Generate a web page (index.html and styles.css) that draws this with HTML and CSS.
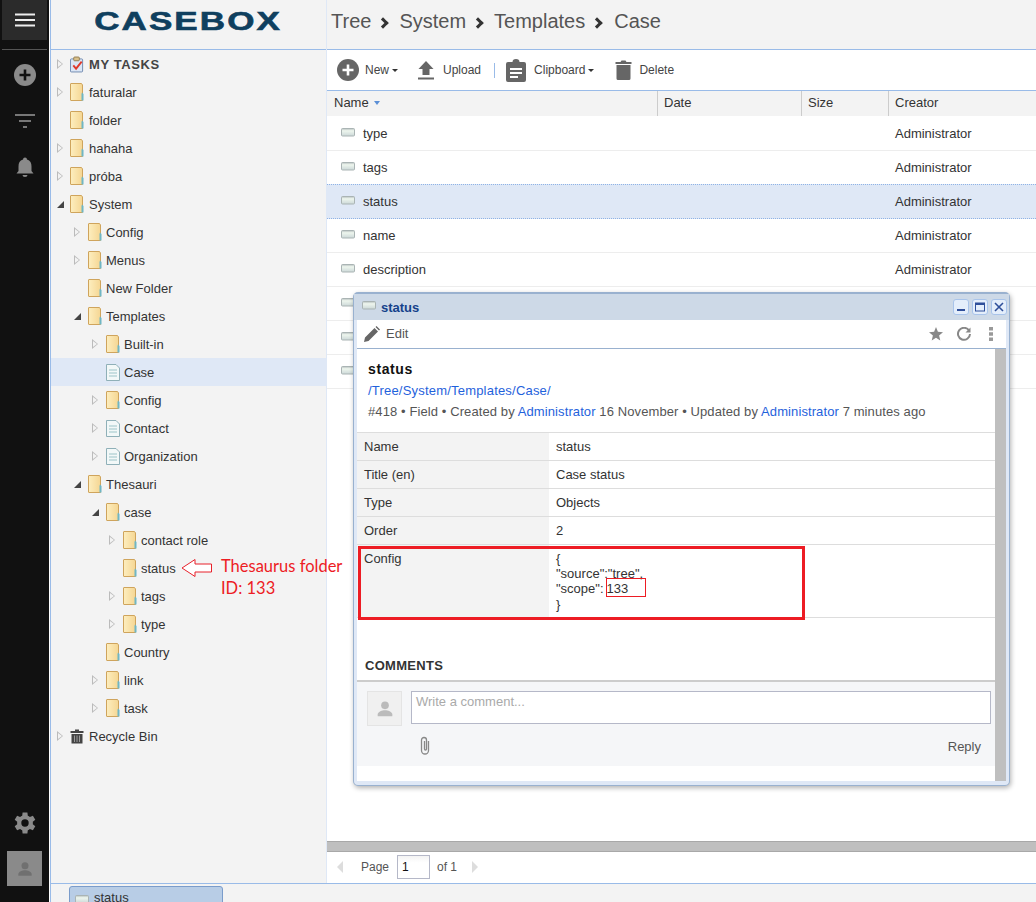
FILE: index.html
```html
<!DOCTYPE html>
<html lang="en">
<head>
    <meta charset="UTF-8">
    <title>CaseBox</title>
    <link rel="stylesheet" href="styles.css">
</head>
<body>
<svg class="defs" width="0" height="0">
    <defs>
        <linearGradient id="folder-fill" x1="0" y1="0" x2="1" y2="0">
            <stop offset="0" stop-color="#fdeebf"/>
            <stop offset="1" stop-color="#f5d693"/>
        </linearGradient>
        <linearGradient id="field-fill" x1="0" y1="0" x2="0" y2="1">
            <stop offset="0" stop-color="#b4bdbd"/>
            <stop offset="0.3" stop-color="#eef6ee"/>
            <stop offset="1" stop-color="#ccd8d8"/>
        </linearGradient>
        <symbol id="i-folder" viewBox="0 0 14 18">
            <path d="M1 .5H11.500L12.500 2V17.500H1Q.5 17.500 .5 17V1Q.5 .5 1 .5Z" fill="url(#folder-fill)" stroke="#cfa45c"/>
            <path d="M12 9.500L13.500 11V17.500H11.500V11Z" fill="#6fb6c4"/>
        </symbol>
        <symbol id="i-field" viewBox="0 0 14 9">
            <rect x=".5" y=".5" width="13" height="7.500" rx="1" fill="url(#field-fill)" stroke="#aab4b4"/>
        </symbol>
        <symbol id="i-person" viewBox="0 0 24 24">
            <circle cx="12" cy="8" r="4.200" fill="currentColor"/>
            <path d="M4 20v-2c0-3 5-4.600 8-4.600s8 1.600 8 4.600v2Z" fill="currentColor"/>
        </symbol>
    </defs>
</svg>

<div class="app">
    <!-- Left rail -->
    <nav class="rail">
        <div class="rail-menu">
            <svg width="20" height="14" viewBox="0 0 20 14"><path d="M0 1.500H20M0 7H20M0 12.500H20" stroke="#eee" stroke-width="2"/></svg>
        </div>
        <div class="rail-sep"></div>
        <svg class="rail-icon" width="22" height="22" viewBox="0 0 22 22"><circle cx="11" cy="11" r="11" fill="#8a8a8a"/><path d="M11 5.500V16.500M5.500 11H16.500" stroke="#111" stroke-width="2.600"/></svg>
        <svg class="rail-icon" width="22" height="22" viewBox="0 0 22 22"><path d="M1 5H21M5 11H17M9 17H13" stroke="#777" stroke-width="2"/></svg>
        <svg class="rail-icon" width="22" height="22" viewBox="0 0 22 22"><path d="M11 1.500a2 2 0 0 1 2 2c3.300 1 4.500 3.500 4.500 7V15l2 2.500H2.500l2-2.500v-4.500c0-3.500 1.200-6 4.500-7a2 2 0 0 1 2-2ZM8.500 19h5a2.500 2 0 0 1-5 0Z" fill="#8a8a8a"/></svg>
        <svg class="rail-gear" width="24" height="24" viewBox="0 0 24 24"><path fill="#8a8a8a" fill-rule="evenodd" d="M19.800 13.200a8 8 0 0 0 0-2.400l2.500-2-2.400-4.100-3 1.200a8 8 0 0 0-2.100-1.200L14.400 1.500H9.600l-.4 3.200a8 8 0 0 0-2.100 1.200l-3-1.200-2.400 4.100 2.500 2a8 8 0 0 0 0 2.400l-2.500 2 2.400 4.100 3-1.200a8 8 0 0 0 2.100 1.200l.4 3.200h4.800l.4-3.200a8 8 0 0 0 2.100-1.200l3 1.200 2.400-4.100ZM12 15.700a3.700 3.700 0 1 1 0-7.400 3.700 3.700 0 0 1 0 7.400Z"/></svg>
        <div class="rail-user"><svg width="20" height="20"><use href="#i-person"/></svg></div>
    </nav>

    <div class="workspace">
        <div class="panels">
            <!-- Tree -->
            <aside class="side">
                <div class="logo-bar"><span class="logo">CASEBOX</span></div>
                <ul class="tree">
                    <li class="node lv0"><i class="arrow"></i>
                        <svg class="node-icon" width="14" height="17" viewBox="0 0 15 17"><rect x=".5" y="2.500" width="13" height="14" rx="1" fill="#dbe6f5" stroke="#6d87ad"/><rect x="4" y=".5" width="6" height="4" rx="1" fill="#d9c08a" stroke="#8f7a4d"/><path d="M3.500 9.500L6.500 13 12.500 5.500" fill="none" stroke="#e0392b" stroke-width="2"/></svg>
                        <b class="tasks">MY TASKS</b></li>
                    <li class="node lv0"><i class="arrow"></i><svg class="node-icon folder"><use href="#i-folder"/></svg>faturalar</li>
                    <li class="node lv0"><i class="arrow none"></i><svg class="node-icon folder"><use href="#i-folder"/></svg>folder</li>
                    <li class="node lv0"><i class="arrow"></i><svg class="node-icon folder"><use href="#i-folder"/></svg>hahaha</li>
                    <li class="node lv0"><i class="arrow"></i><svg class="node-icon folder"><use href="#i-folder"/></svg>próba</li>
                    <li class="node lv0"><i class="arrow open"></i><svg class="node-icon folder"><use href="#i-folder"/></svg>System</li>
                    <li class="node lv1"><i class="arrow"></i><svg class="node-icon folder"><use href="#i-folder"/></svg>Config</li>
                    <li class="node lv1"><i class="arrow"></i><svg class="node-icon folder"><use href="#i-folder"/></svg>Menus</li>
                    <li class="node lv1"><i class="arrow none"></i><svg class="node-icon folder"><use href="#i-folder"/></svg>New Folder</li>
                    <li class="node lv1"><i class="arrow open"></i><svg class="node-icon folder"><use href="#i-folder"/></svg>Templates</li>
                    <li class="node lv2"><i class="arrow"></i><svg class="node-icon folder"><use href="#i-folder"/></svg>Built-in</li>
                    <li class="node lv2 selected"><i class="arrow none"></i><svg class="node-icon" width="14" height="17" viewBox="0 0 14 17"><path d="M.5.5H10L13.500 4V16.500H.5Z" fill="#f2f8f8" stroke="#8fb0b8"/><path d="M3 6H11M3 9H11M3 12H11" stroke="#9cc4c8"/></svg>Case</li>
                    <li class="node lv2"><i class="arrow"></i><svg class="node-icon folder"><use href="#i-folder"/></svg>Config</li>
                    <li class="node lv2"><i class="arrow"></i><svg class="node-icon" width="14" height="17" viewBox="0 0 14 17"><path d="M.5.5H10L13.500 4V16.500H.5Z" fill="#f2f8f8" stroke="#8fb0b8"/><path d="M3 6H11M3 9H11M3 12H11" stroke="#9cc4c8"/></svg>Contact</li>
                    <li class="node lv2"><i class="arrow"></i><svg class="node-icon" width="14" height="17" viewBox="0 0 14 17"><path d="M.5.5H10L13.500 4V16.500H.5Z" fill="#f2f8f8" stroke="#8fb0b8"/><path d="M3 6H11M3 9H11M3 12H11" stroke="#9cc4c8"/></svg>Organization</li>
                    <li class="node lv1"><i class="arrow open"></i><svg class="node-icon folder"><use href="#i-folder"/></svg>Thesauri</li>
                    <li class="node lv2"><i class="arrow open"></i><svg class="node-icon folder"><use href="#i-folder"/></svg>case</li>
                    <li class="node lv3"><i class="arrow"></i><svg class="node-icon folder"><use href="#i-folder"/></svg>contact role</li>
                    <li class="node lv3"><i class="arrow none"></i><svg class="node-icon folder"><use href="#i-folder"/></svg>status
                        <svg class="note-arrow" width="32" height="20" viewBox="0 0 32 20"><path d="M1 10L14 1.500V6H30.500V14H14V18.500Z" fill="#fff" stroke="#e8212b"/></svg>
                    </li>
                    <li class="node lv3"><i class="arrow"></i><svg class="node-icon folder"><use href="#i-folder"/></svg>tags</li>
                    <li class="node lv3"><i class="arrow"></i><svg class="node-icon folder"><use href="#i-folder"/></svg>type</li>
                    <li class="node lv2"><i class="arrow none"></i><svg class="node-icon folder"><use href="#i-folder"/></svg>Country</li>
                    <li class="node lv2"><i class="arrow"></i><svg class="node-icon folder"><use href="#i-folder"/></svg>link</li>
                    <li class="node lv2"><i class="arrow"></i><svg class="node-icon folder"><use href="#i-folder"/></svg>task</li>
                    <li class="node lv0"><i class="arrow"></i>
                        <svg class="node-icon" width="14" height="15" viewBox="0 0 14 15"><path d="M5 .5H9V2H13.500V4H.5V2H5ZM1.500 5H12.500V14.500H1.500Z" fill="#444"/><path d="M4.500 6.500V13M7 6.500V13M9.500 6.500V13" stroke="#999"/></svg>
                        Recycle Bin</li>
                </ul>
                <div class="note">Thesaurus folder<br>ID: 133</div>
            </aside>

            <!-- Main -->
            <main class="main">
                <header class="crumbs">
                    <span>Tree</span><span class="chev"></span><span>System</span><span class="chev"></span><span>Templates</span><span class="chev"></span><span>Case</span>
                </header>
                <div class="toolbar">
                    <span class="tool">
                        <svg width="22" height="22" viewBox="0 0 22 22"><circle cx="11" cy="11" r="11" fill="#666"/><path d="M11 5.500V16.500M5.500 11H16.500" stroke="#fff" stroke-width="2.600"/></svg>
                        New<i class="caret"></i>
                    </span>
                    <span class="tool">
                        <svg width="18" height="20" viewBox="0 0 18 20"><path d="M9 1L16.500 9H12.500V15H5.500V9H1.500ZM1 17.500H17V19.500H1Z" fill="#666"/></svg>
                        Upload
                    </span>
                    <span class="tool-sep"></span>
                    <span class="tool">
                        <svg width="20" height="23" viewBox="0 0 20 23"><path fill="#666" fill-rule="evenodd" d="M2 3H6.500a3.500 3 0 0 1 7 0H18a2 2 0 0 1 2 2V21a2 2 0 0 1-2 2H2a2 2 0 0 1-2-2V5a2 2 0 0 1 2-2ZM4 9V11H16V9ZM4 13V15H16V13ZM4 17V19H12V17Z"/></svg>
                        Clipboard<i class="caret"></i>
                    </span>
                    <span class="tool">
                        <svg width="17" height="20" viewBox="0 0 17 20"><path d="M.5 2H5.500L6.500.5H10.500L11.500 2H16.500V4H.5ZM1.500 5H15.500V18.500Q15.500 20 14 20H3Q1.500 20 1.500 18.500Z" fill="#666"/></svg>
                        Delete
                    </span>
                </div>
                <div class="grid-head">
                    <div class="col col-name">Name<i class="sort"></i></div>
                    <div class="col col-date">Date</div>
                    <div class="col col-size">Size</div>
                    <div class="col col-creator">Creator</div>
                </div>
                <div class="grid-body">
                    <div class="grid-row"><svg class="field-icon"><use href="#i-field"/></svg><span class="row-name">type</span><span>Administrator</span></div>
                    <div class="grid-row"><svg class="field-icon"><use href="#i-field"/></svg><span class="row-name">tags</span><span>Administrator</span></div>
                    <div class="grid-row active"><svg class="field-icon"><use href="#i-field"/></svg><span class="row-name">status</span><span>Administrator</span></div>
                    <div class="grid-row"><svg class="field-icon"><use href="#i-field"/></svg><span class="row-name">name</span><span>Administrator</span></div>
                    <div class="grid-row"><svg class="field-icon"><use href="#i-field"/></svg><span class="row-name">description</span><span>Administrator</span></div>
                    <div class="grid-row"><svg class="field-icon"><use href="#i-field"/></svg></div>
                    <div class="grid-row"><svg class="field-icon"><use href="#i-field"/></svg></div>
                    <div class="grid-row"><svg class="field-icon"><use href="#i-field"/></svg></div>
                </div>
                <div class="hscroll"></div>
                <div class="pager">
                    <i class="page-prev"></i>
                    <span class="page-label">Page</span>
                    <span class="page-input">1</span>
                    <span class="page-of">of 1</span>
                    <i class="page-next"></i>
                </div>

                <!-- Preview window -->
                <section class="win">
                    <div class="win-title">
                        <svg class="field-icon"><use href="#i-field"/></svg>
                        <span class="win-name">status</span>
                        <span class="win-btns">
                            <span class="win-btn"><svg width="10" height="10" viewBox="0 0 10 10"><path d="M1 8H9" stroke="#2f4f9a" stroke-width="2"/></svg></span>
                            <span class="win-btn"><svg width="10" height="10" viewBox="0 0 10 10"><rect x=".5" y="1" width="9" height="8" fill="none" stroke="#2f4f9a"/><path d="M.5 2H9.500" stroke="#2f4f9a" stroke-width="2"/></svg></span>
                            <span class="win-btn"><svg width="10" height="10" viewBox="0 0 10 10"><path d="M1 1L9 9M9 1L1 9" stroke="#2f4f9a" stroke-width="1.600"/></svg></span>
                        </span>
                    </div>
                    <div class="win-tools">
                        <svg width="16" height="16" viewBox="0 0 16 16"><path d="M0 16L1 11.500 10.500 2 14 5.500 4.500 15ZM11.500 1L12.500 0 16 3.500 15 4.500Z" fill="#666"/></svg>
                        <span class="win-edit">Edit</span>
                        <span class="win-actions">
                            <svg width="14" height="14" viewBox="0 0 14 14"><path d="M7 0L8.900 4.800 14 5.200 10.100 8.500 11.300 13.500 7 10.800 2.700 13.500 3.900 8.500 0 5.200 5.100 4.800Z" fill="#888"/></svg>
                            <svg width="14" height="14" viewBox="0 0 14 14"><path d="M12 3.500A6 6 0 1 0 13 7" fill="none" stroke="#888" stroke-width="2"/><path d="M13.500 .5V5.500H8.500Z" fill="#888"/></svg>
                            <svg class="win-more" width="4" height="14" viewBox="0 0 4 14"><path d="M0 0H4V3.500H0ZM0 5.200H4V8.700H0ZM0 10.500H4V14H0Z" fill="#999"/></svg>
                        </span>
                    </div>
                    <div class="win-body">
                        <div class="win-content">
                            <div class="summary">
                                <div class="summary-title">status</div>
                                <a class="summary-path">/Tree/System/Templates/Case/</a>
                                <div class="summary-meta">#418 • Field • Created by <a>Administrator</a> 16 November • Updated by <a>Administrator</a> 7 minutes ago</div>
                            </div>
                            <div class="props">
                                <div class="prop"><div class="prop-key">Name</div><div class="prop-val">status</div></div>
                                <div class="prop"><div class="prop-key">Title (en)</div><div class="prop-val">Case status</div></div>
                                <div class="prop"><div class="prop-key">Type</div><div class="prop-val">Objects</div></div>
                                <div class="prop"><div class="prop-key">Order</div><div class="prop-val">2</div></div>
                                <div class="prop prop-config"><div class="prop-key">Config</div><div class="prop-val">{<br>"source":"tree",<br>"scope":<span class="mark-small">133</span><br>}</div>
                                    <div class="mark-big"></div>
                                </div>
                            </div>
                            <h3 class="comments-title">COMMENTS</h3>
                            <div class="comment-box">
                                <div class="comment-user"><svg width="22" height="22"><use href="#i-person"/></svg></div>
                                <div class="comment-main">
                                    <div class="comment-input">Write a comment...</div>
                                    <div class="comment-foot">
                                        <svg width="12" height="20" viewBox="0 0 12 20"><path d="M9.500 5V14.500a3.500 3.500 0 0 1-7 0V4a2.500 2.500 0 0 1 5 0V13a1 1 0 0 1-2 0V5" fill="none" stroke="#888" stroke-width="1.300"/></svg>
                                        <span class="reply">Reply</span>
                                    </div>
                                </div>
                            </div>
                        </div>
                        <div class="win-scroll"></div>
                    </div>
                </section>
            </main>
        </div>

        <!-- Open windows bar -->
        <footer class="taskbar">
            <div class="task-tab"><svg class="field-icon"><use href="#i-field"/></svg>status</div>
        </footer>
    </div>
</div>
</body>
</html>
```

FILE: styles.css
```css
* {
    box-sizing: border-box;
}
html, body {
    margin: 0;
    height: 100%;
    overflow: hidden;
}
body {
    font-family: "Liberation Sans", Arial, sans-serif;
    font-size: 13px;
    color: #333;
    background: #fff;
}
a {
    color: #1f62dc;
}
.defs {
    position: absolute;
}
.app {
    display: flex;
    width: 1036px;
    height: 902px;
}

/* rail */
.rail {
    width: 49px;
    flex: none;
    background: #111;
    display: flex;
    flex-direction: column;
    align-items: center;
}
.rail-menu {
    width: 45px;
    height: 40px;
    background: #2b2b2b;
    display: flex;
    align-items: center;
    justify-content: center;
}
.rail-sep {
    width: 45px;
    height: 1px;
    background: #555;
    margin: 9px 0 14px;
}
.rail-icon {
    margin-bottom: 24px;
}
.rail-gear {
    margin-top: auto;
    margin-bottom: 16px;
}
.rail-user {
    width: 35px;
    height: 35px;
    background: #8a8a8a;
    color: #707070;
    display: flex;
    align-items: center;
    justify-content: center;
    margin-bottom: 16px;
}

.workspace {
    flex: 1;
    min-width: 0;
    margin-left: 1px;
    border-left: 1px solid #99bbe8;
    display: flex;
    flex-direction: column;
}
.panels {
    flex: 1;
    min-height: 0;
    display: flex;
}

/* tree */
.side {
    width: 276px;
    flex: none;
    background: #f3f3f3;
    border-right: 1px solid #dfe8f6;
    position: relative;
}
.logo-bar {
    height: 50px;
    border-bottom: 1px solid #99bbe8;
    display: flex;
    justify-content: center;
    padding-top: 7px;
}
.logo {
    font-size: 25px;
    font-weight: bold;
    color: #0f3f5e;
    letter-spacing: 1.5px;
    line-height: 28px;
    display: inline-block;
    transform: scaleX(1.4);
    -webkit-text-stroke: 0.6px #0f3f5e;
}
.tree {
    list-style: none;
    margin: 0;
    padding: 0;
}
.node {
    height: 28px;
    display: flex;
    align-items: center;
    position: relative;
}
.lv0 { padding-left: 5px; }
.lv1 { padding-left: 22px; }
.lv2 { padding-left: 40px; }
.lv3 { padding-left: 57px; }
.selected {
    background: #dfe8f6;
}
.arrow {
    width: 0;
    height: 0;
    flex: none;
    position: relative;
    margin-left: 1px;
    margin-right: 7px;
    border-style: solid;
    border-width: 5px 0 5px 6px;
    border-color: transparent transparent transparent #bbb;
}
.arrow::after {
    content: "";
    position: absolute;
    left: -5px;
    top: -3px;
    border-style: solid;
    border-width: 3px 0 3px 4px;
    border-color: transparent transparent transparent #f3f3f3;
}
.arrow.none {
    border-color: transparent;
}
.arrow.open {
    border-width: 0 0 7px 7px;
    border-color: transparent transparent #444 transparent;
    margin-right: 6px;
}
.arrow.none::after, .arrow.open::after {
    display: none;
}
.node-icon {
    flex: none;
    margin-right: 5px;
}
.folder {
    width: 14px;
    height: 18px;
}
.lv1 .node-icon, .lv2 .node-icon, .lv3 .node-icon {
    margin-left: 1px;
    margin-right: 4px;
}
.tasks {
    letter-spacing: 0.6px;
    color: #444;
}
.note-arrow {
    position: absolute;
    left: 130px;
    top: 4px;
}
.note {
    position: absolute;
    left: 170px;
    top: 555px;
    font-family: Lato, sans-serif;
    font-size: 16.5px;
    line-height: 22px;
    color: #ed1c24;
    white-space: nowrap;
    z-index: 3;
}

/* main */
.main {
    flex: 1;
    min-width: 0;
    position: relative;
    display: flex;
    flex-direction: column;
    background: #fff;
}
.crumbs {
    height: 50px;
    flex: none;
    background: #f3f3f3;
    border-bottom: 1px solid #99bbe8;
    display: flex;
    align-items: center;
    padding: 0 0 7px 4px;
    font-size: 20px;
    color: #555;
}
.chev {
    width: 8px;
    height: 8px;
    border-top: 3px solid #333;
    border-right: 3px solid #333;
    transform: rotate(45deg);
    margin: 3px 12px 0 8px;
}
.chev:nth-last-child(2) {
    margin-right: 13px;
}
.toolbar {
    height: 41px;
    flex: none;
    border-bottom: 1px solid #99bbe8;
    display: flex;
    align-items: center;
    padding-left: 10px;
    font-size: 12px;
    color: #444;
}
.tool {
    display: flex;
    align-items: center;
    gap: 6px;
    margin-right: 21px;
}
.tool:first-child {
    margin-right: 19px;
}
.tool:nth-child(2) svg {
    margin-right: 2px;
}
.tool:nth-child(4) svg {
    margin-right: 2px;
}
.tool:nth-child(5) svg {
    margin-right: 1px;
}
.tool-sep {
    width: 1px;
    height: 15px;
    background: #99bbe8;
    margin: 0 11px 0 -8px;
}
.caret {
    width: 0;
    height: 0;
    margin-left: -3px;
    border-style: solid;
    border-width: 3px 3px 0;
    border-color: #333 transparent transparent;
}
.grid-head {
    height: 25px;
    flex: none;
    display: flex;
    background: #f3f3f3;
}
.col {
    padding: 4px 6px 0;
    border-right: 1px solid #ccc;
    color: #333;
}
.col-name { width: 331px; padding-left: 7px; }
.col-date { width: 144px; }
.col-size { width: 87px; }
.col-creator { flex: 1; border-right: none; }
.sort {
    display: inline-block;
    margin-left: 5px;
    vertical-align: 2px;
    border-style: solid;
    border-width: 4px 3.5px 0;
    border-color: #5b8fd6 transparent transparent;
}
.grid-body {
    flex: 1;
    min-height: 0;
    padding-top: 1px;
}
.grid-row {
    height: 34px;
    display: flex;
    align-items: center;
    padding-left: 14px;
    border-bottom: 1px solid #ededed;
}
.grid-row.active {
    height: 35px;
    margin-top: -1px;
    background: #dfe8f6;
    border-top: 1px dotted #8fb3e6;
    border-bottom: 1px dotted #8fb3e6;
}
.field-icon {
    width: 14px;
    height: 9px;
    flex: none;
    margin-top: -3px;
}
.row-name {
    width: 540px;
    padding-left: 8px;
}
.hscroll {
    height: 11px;
    flex: none;
    background: #bfbfbf;
    border-top: 1px solid #a8a8a8;
    border-bottom: 1px solid #a8a8a8;
}
.pager {
    height: 31px;
    flex: none;
    display: flex;
    align-items: center;
    padding: 0 0 2px 10px;
    font-size: 12px;
    color: #555;
}
.page-prev, .page-next {
    width: 0;
    height: 0;
    border-style: solid;
    border-width: 6px 6px 6px 0;
    border-color: transparent #ddd transparent transparent;
}
.page-next {
    border-width: 6px 0 6px 6px;
    border-color: transparent transparent transparent #ddd;
    margin-left: 15px;
}
.page-label {
    margin-left: 18px;
}
.page-input {
    width: 33px;
    height: 24px;
    margin-left: 8px;
    padding: 4px 4px 0;
    border: 1px solid #b5b8c8;
    background: linear-gradient(#f3f3f3, #fff 30%);
    color: #111;
}
.page-of {
    margin-left: 7px;
}

/* window */
.win {
    position: absolute;
    left: 26px;
    top: 292px;
    width: 657px;
    height: 494px;
    background: #dfe8f6;
    border: 1px solid #99b1cf;
    border-top-width: 2px;
    border-radius: 5px;
    box-shadow: 1px 2px 5px rgba(0, 0, 0, 0.3);
    padding: 0 3px 4px;
    display: flex;
    flex-direction: column;
    z-index: 2;
}
.win-title {
    height: 26px;
    flex: none;
    margin: 0 -3px;
    padding-left: 8px;
    background: #cdd9e7;
    display: flex;
    align-items: center;
    gap: 5px;
}
.win-name {
    font-weight: bold;
    color: #15428b;
}
.win-btns {
    margin-left: auto;
    margin-right: 2px;
    display: flex;
    gap: 3px;
}
.win-btn {
    width: 16px;
    height: 16px;
    border: 1px solid #a9c4ea;
    border-radius: 3px;
    background: #e4eefb;
    display: flex;
    align-items: center;
    justify-content: center;
}
.win-tools {
    height: 29px;
    flex: none;
    background: #fff;
    border-bottom: 1px solid #99b1cf;
    display: flex;
    align-items: center;
    padding: 0 10px 1px 7px;
}
.win-edit {
    margin-left: 6px;
    color: #555;
}
.win-actions {
    margin-left: auto;
    display: flex;
    align-items: center;
    gap: 14px;
    padding-right: 3px;
}
.win-more {
    margin-left: 4px;
}
.win-body {
    flex: 1;
    min-height: 0;
    background: #fff;
    display: flex;
}
.win-content {
    flex: 1;
    min-width: 0;
}
.win-scroll {
    width: 11px;
    flex: none;
    background: #bfbfbf;
}
.summary {
    height: 84px;
    padding: 10px 11px 0;
    border-bottom: 1px solid #ddd;
    line-height: 21px;
    color: #555;
}
.summary-title {
    font-size: 14px;
    font-weight: bold;
    letter-spacing: 0.6px;
    color: #111;
}
.summary-path {
    letter-spacing: 0.2px;
}
.summary-meta {
    white-space: nowrap;
    letter-spacing: 0.1px;
}
.prop {
    display: flex;
    height: 28px;
    border-bottom: 1px solid #ddd;
    line-height: 27px;
    position: relative;
}
.prop-key {
    width: 192px;
    flex: none;
    padding-left: 7px;
    background: #f3f3f3;
}
.prop-val {
    padding-left: 7px;
}
.prop-config {
    height: 73px;
}
.prop-config .prop-val {
    padding-top: 6px;
    line-height: 15px;
}
.mark-small {
    display: inline-block;
    width: 40px;
    height: 19px;
    line-height: 19px;
    border: 1px solid #ed1c24;
    margin: -3px 0 0 2px;
    vertical-align: top;
}
.mark-big {
    position: absolute;
    left: 1px;
    top: 1px;
    width: 447px;
    height: 74px;
    border: 3px solid #ed1c24;
}
.comments-title {
    margin: 40px 0 0;
    height: 24px;
    padding-left: 8px;
    font-size: 13px;
    font-weight: bold;
    line-height: 15px;
    letter-spacing: 0.3px;
    color: #333;
    border-bottom: 2px solid #ccc;
}
.comment-box {
    height: 84px;
    background: #f5f6f8;
    display: flex;
    padding: 9px 4px 0 10px;
}
.comment-user {
    width: 35px;
    height: 35px;
    flex: none;
    background: #f0f0f0;
    border: 1px solid #e4e4e4;
    color: #bbb;
    display: flex;
    align-items: center;
    justify-content: center;
}
.comment-main {
    flex: 1;
    margin-left: 9px;
}
.comment-input {
    height: 33px;
    padding: 2px 4px;
    border: 1px solid #b5b8c8;
    background: #fff;
    color: #aaa;
}
.comment-foot {
    display: flex;
    align-items: center;
    justify-content: space-between;
    padding: 12px 10px 0 8px;
    color: #555;
}

/* bottom bar */
.taskbar {
    height: 19px;
    flex: none;
    background: #f3f3f3;
    border-top: 1px solid #99bbe8;
    padding: 2px 0 0 18px;
}
.task-tab {
    width: 154px;
    height: 20px;
    background: #b8cde6;
    border: 1px solid #7a9ccb;
    border-radius: 3px 3px 0 0;
    padding: 3px 0 0 5px;
    display: flex;
    gap: 5px;
}
.task-tab .field-icon {
    margin-top: 5px;
}
```
